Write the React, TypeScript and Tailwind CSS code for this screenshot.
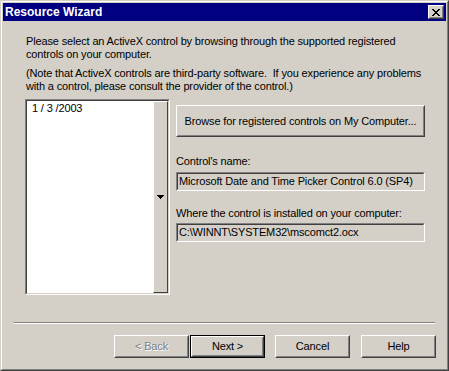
import React from 'react';

const Raised: React.FC<{ className?: string; children?: React.ReactNode }> = ({ className = '', children }) => (
  <div className={`border border-t-white border-l-white border-r-[#404040] border-b-[#404040] ${className}`}>
    <div className="h-full w-full border border-t-[#d4d0c8] border-l-[#d4d0c8] border-r-[#808080] border-b-[#808080] flex items-center justify-center">
      {children}
    </div>
  </div>
);

const Sunken: React.FC<{ className?: string; children?: React.ReactNode }> = ({ className = '', children }) => (
  <div className={`border border-t-[#808080] border-l-[#808080] border-r-white border-b-white ${className}`}>
    <div className="h-full w-full border border-t-[#404040] border-l-[#404040] border-r-[#d4d0c8] border-b-[#d4d0c8] flex">
      {children}
    </div>
  </div>
);

const WizardButton: React.FC<{ label: string; disabled?: boolean; isDefault?: boolean }> = ({ label, disabled, isDefault }) => {
  const text = disabled ? (
    <span className="text-[#808080] [text-shadow:1px_1px_0_#ffffff]">{label}</span>
  ) : (
    <span>{label}</span>
  );
  if (isDefault) {
    return (
      <div className="w-[75px] h-[23px] border border-black">
        <Raised className="h-full w-full">{text}</Raised>
      </div>
    );
  }
  return <Raised className="w-[75px] h-[23px]">{text}</Raised>;
};

export default function App() {
  return (
    <div className="w-[449px] h-[371px] overflow-hidden bg-[#d4d0c8] text-black text-[11px] leading-[13px] tracking-[-0.15px] whitespace-nowrap font-['Liberation_Sans',Arial,sans-serif] border border-t-[#d4d0c8] border-l-[#d4d0c8] border-r-[#404040] border-b-[#404040]">
      <div className="h-full border border-t-white border-l-white border-r-[#808080] border-b-[#808080] p-px flex flex-col">
        {/* Title bar */}
        <div className="h-[18px] shrink-0 bg-[#000080] flex items-center justify-between pl-[2px] pr-[2px]">
          <span className="text-white font-bold text-[12px] leading-[18px] tracking-normal">Resource Wizard</span>
          <Raised className="w-[16px] h-[14px] bg-[#d4d0c8]">
            <svg className="block shrink-0" width="8" height="7" viewBox="0 0 8 7" shapeRendering="crispEdges">
              <path d="M0 0h2v1H0zM6 0h2v1H6zM1 1h2v1H1zM5 1h2v1H5zM2 2h4v1H2zM3 3h2v1H3zM2 4h4v1H2zM1 5h2v1H1zM5 5h2v1H5zM0 6h2v1H0zM6 6h2v1H6z" fill="#000000" />
            </svg>
          </Raised>
        </div>

        {/* Body */}
        <div className="flex-1 flex flex-col">
          <div className="pl-[23px] pt-[14px]">
            <p>
              Please select an ActiveX control by browsing through the supported registered
              <br />
              controls on your computer.
            </p>
            <p className="mt-[6px]">
              (Note that ActiveX controls are third-party software.&nbsp; If you experience any problems
              <br />
              with a control, please consult the provider of the control.)
            </p>
          </div>

          <div className="flex pl-[22px] mt-[6px] h-[196px] shrink-0">
            {/* Date picker preview */}
            <Sunken className="w-[145px] h-[196px]">
              <div className="flex-1 bg-white pl-[5px] pt-[1px]">1 / 3 /2003</div>
              <div className="w-[15px] bg-[#d4d0c8] border border-t-white border-l-white border-r-[#404040] border-b-[#404040] flex items-center justify-center">
                <svg className="block shrink-0" width="7" height="4" viewBox="0 0 7 4" shapeRendering="crispEdges">
                  <path d="M0 0h7v1H0zM1 1h5v1H1zM2 2h3v1H2zM3 3h1v1H3z" fill="#000000" />
                </svg>
              </div>
            </Sunken>

            {/* Right column */}
            <div className="ml-[6px] w-[249px] flex flex-col">
              <Raised className="mt-[6px] h-[32px] w-[249px]">
                <span>Browse for registered controls on My Computer...</span>
              </Raised>
              <div className="mt-[18px]">Control's name:</div>
              <Sunken className="mt-[4px] h-[19px] w-[249px]">
                <div className="flex-1 pl-[1px] leading-[15px]">Microsoft Date and Time Picker Control 6.0 (SP4)</div>
              </Sunken>
              <div className="mt-[16px]">Where the control is installed on your computer:</div>
              <Sunken className="mt-[3px] h-[19px] w-[249px]">
                <div className="flex-1 pl-[1px] leading-[15px]">C:\WINNT\SYSTEM32\mscomct2.ocx</div>
              </Sunken>
            </div>
          </div>

          {/* Separator */}
          <div className="mx-[11px] mt-[27px] border-t border-t-[#808080] border-b border-b-white" />

          {/* Buttons */}
          <div className="flex justify-end pr-[10px] mt-[11px]">
            <WizardButton label="< Back" disabled />
            <div className="ml-[1px]">
              <WizardButton label="Next >" isDefault />
            </div>
            <div className="ml-[10px]">
              <WizardButton label="Cancel" />
            </div>
            <div className="ml-[11px]">
              <WizardButton label="Help" />
            </div>
          </div>
        </div>
      </div>
    </div>
  );
}
